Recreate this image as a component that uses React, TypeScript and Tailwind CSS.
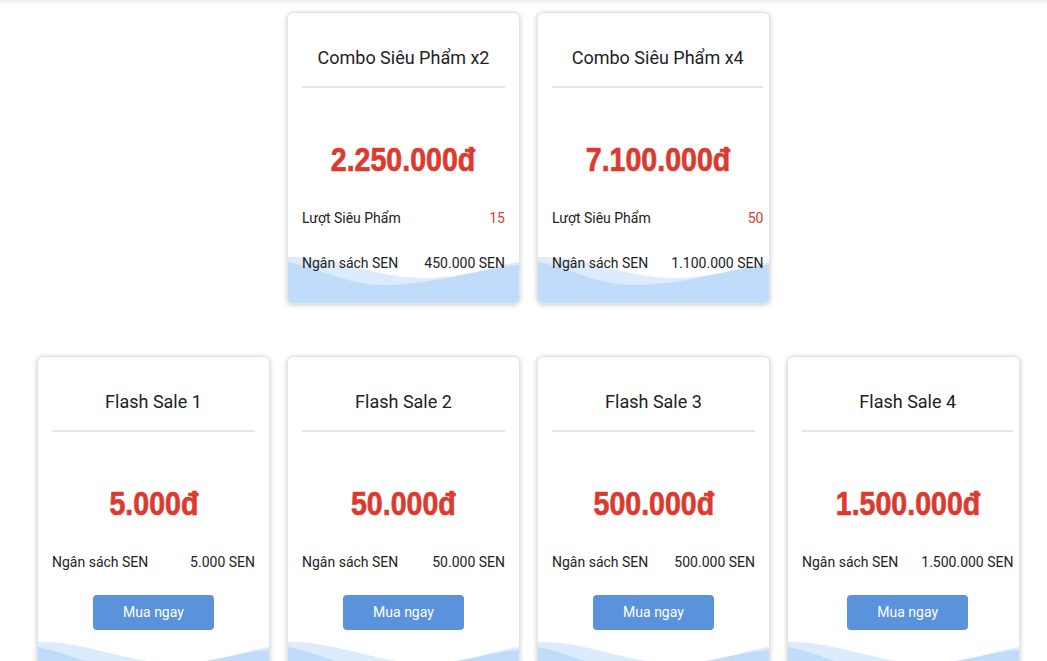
import React from "react";

function Wave() {
  return (
    <svg
      className="absolute bottom-0 left-0 w-full h-[56px]"
      viewBox="0 0 233 56"
      preserveAspectRatio="none"
    >
      <path d="M0 10 C 50 9, 90 32, 140 31 C 185 30, 210 18, 233 15 V56 H0 Z" fill="#dcebfd" />
      <path d="M0 15 C 30 20, 60 38, 95 38 C 150 38, 195 21, 233 18 V56 H0 Z" fill="#c1dcfb" />
    </svg>
  );
}

type Row = { label: string; value: string; red?: boolean };

function Card({ title, price, rows, button }: { title: string; price: string; rows: Row[]; button?: boolean }) {
  return (
    <div
      className={`relative w-[233px] ${button ? "h-[333px]" : "h-[292px]"} shrink-0 bg-white rounded-[6px] border border-[#e4e4e4] shadow-[0_1px_5px_rgba(0,0,0,0.22)] overflow-hidden`}
    >
      <div className="relative z-10 pl-[14px]">
        <div className="w-max min-w-[203px]">
          <div className="h-[75px] pt-[15px] flex items-center justify-center border-b-2 border-[#e6e6e6] text-[18px] text-[#222]">
            {title}
          </div>
          <div className="pt-[51px] h-[91px] flex justify-center">
            <span
              className="inline-block scale-x-[0.84] text-[#db3a2f] text-[34px] leading-[40px] font-bold [-webkit-text-stroke:0.7px_#db3a2f]"
              style={{ fontFamily: '"Liberation Sans", Arial, sans-serif' }}
            >
              {price}
            </span>
          </div>
          {rows.map((r, i) => (
            <div
              key={i}
              className={`flex justify-between gap-[23px] items-center h-[20px] text-[14px] text-[#222] ${i === 0 ? "mt-[29px]" : "mt-[25px]"}`}
            >
              <span>{r.label}</span>
              <span className={r.red ? "text-[#e03b30]" : ""}>{r.value}</span>
            </div>
          ))}
          {button && (
            <div className="flex justify-center mt-[23px]">
              <button className="w-[121px] h-[35px] rounded-[4px] bg-[#5b92dc] text-white text-[14px]">Mua ngay</button>
            </div>
          )}
        </div>
      </div>
      <Wave />
    </div>
  );
}

export default function App() {
  return (
    <div
      className="w-[1047px] h-[661px] overflow-hidden bg-white"
      style={{ fontFamily: 'Roboto, "Noto Sans", sans-serif' }}
    >
      <div className="h-[3px] bg-[#f3f3f3]" />
      <div className="pl-[37px] pt-[9px] flex flex-col gap-[52px]">
        <div className="flex gap-[17px] pl-[250px]">
          <Card
            title="Combo Siêu Phẩm x2"
            price="2.250.000đ"
            rows={[
              { label: "Lượt Siêu Phẩm", value: "15", red: true },
              { label: "Ngân sách SEN", value: "450.000 SEN" },
            ]}
          />
          <Card
            title="Combo Siêu Phẩm x4"
            price="7.100.000đ"
            rows={[
              { label: "Lượt Siêu Phẩm", value: "50", red: true },
              { label: "Ngân sách SEN", value: "1.100.000 SEN" },
            ]}
          />
        </div>
        <div className="flex gap-[17px]">
          <Card title="Flash Sale 1" price="5.000đ" rows={[{ label: "Ngân sách SEN", value: "5.000 SEN" }]} button />
          <Card title="Flash Sale 2" price="50.000đ" rows={[{ label: "Ngân sách SEN", value: "50.000 SEN" }]} button />
          <Card title="Flash Sale 3" price="500.000đ" rows={[{ label: "Ngân sách SEN", value: "500.000 SEN" }]} button />
          <Card title="Flash Sale 4" price="1.500.000đ" rows={[{ label: "Ngân sách SEN", value: "1.500.000 SEN" }]} button />
        </div>
      </div>
    </div>
  );
}
